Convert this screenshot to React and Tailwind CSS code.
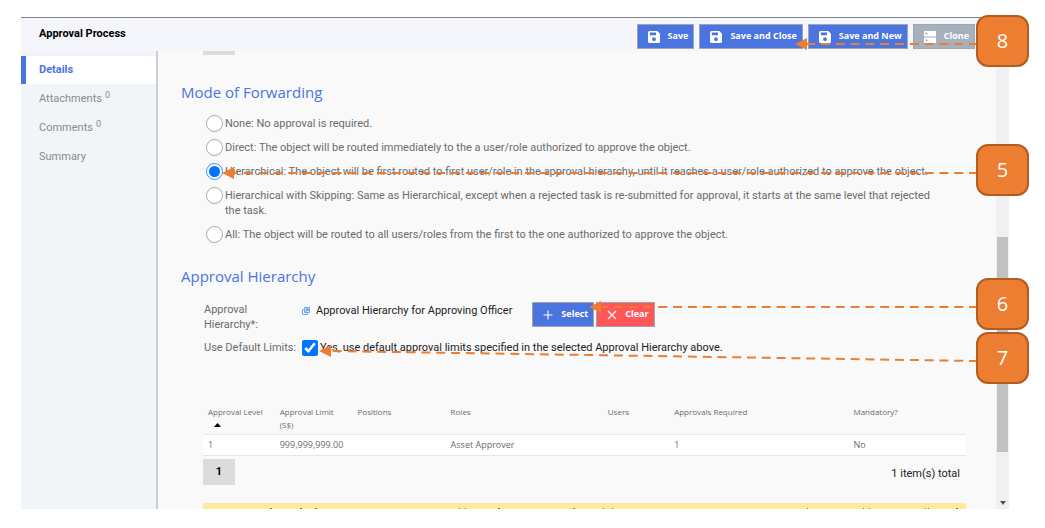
import React from "react";

const bodyFont = "font-['Roboto','Noto_Sans',sans-serif]";
const accentFont = "font-['Open_Sans','Noto_Sans',sans-serif]";

function SaveIcon() {
  return (
    <svg width="12" height="12" viewBox="0 0 12 12" aria-hidden="true">
      <path fill="#fff" fillRule="evenodd" d="M1.500 0h7.800L12 2.700v7.800a1.500 1.500 0 0 1-1.500 1.500h-9A1.500 1.500 0 0 1 0 10.500v-9A1.500 1.500 0 0 1 1.500 0zM1.800 1.500v2.700h6.200V1.500zM6 6.300a1.900 1.900 0 1 0 0 3.800 1.900 1.900 0 0 0 0-3.800z" />
    </svg>
  );
}

function CloneIcon() {
  return (
    <svg width="12" height="12" viewBox="0 0 12 12" aria-hidden="true">
      <path fill="#fff" fillRule="evenodd" d="M.7 0h10.600q.7 0 .7.700v4q0 .700-.700.700H.700Q0 5.400 0 4.700v-4Q0 0 .700 0zM2.500 1.600a1.100 1.100 0 1 0 0 2.200 1.100 1.100 0 0 0 0-2.200zM.700 6.600h10.600q.7 0 .7.700v4q0 .700-.700.700H.700Q0 12 0 11.300v-4q0-.700.700-.700zM2.500 8.200a1.100 1.100 0 1 0 0 2.200 1.100 1.100 0 0 0 0-2.200z" />
    </svg>
  );
}

function PlusIcon() {
  return (
    <svg width="10" height="10" viewBox="0 0 10 10" aria-hidden="true">
      <path d="M5 .5v9M.5 5h9" stroke="#fff" strokeWidth="1.100" />
    </svg>
  );
}

function CrossIcon() {
  return (
    <svg width="10" height="10" viewBox="0 0 10 10" aria-hidden="true">
      <path d="M1 1l8 8M9 1l-8 8" stroke="#fff" strokeWidth="1.200" />
    </svg>
  );
}

function LinkIcon() {
  return (
    <svg width="8" height="8" viewBox="0 0 8 8" aria-hidden="true">
      <path d="M2 2.500H.5v5h5V6" fill="none" stroke="#6ea8ee" />
      <path d="M2.500.5h5v5h-5z" fill="#d6e8fc" stroke="#6ea8ee" />
      <path d="M3.500 4.500l2.500-2.500M4 2h2v2" fill="none" stroke="#3f86e0" />
    </svg>
  );
}

function ActionButton({ icon, tone, children }) {
  return (
    <button type="button" className={`flex h-[25px] shrink-0 items-center gap-2 border border-[#a0a5b0] pl-[10px] pr-[5px] text-[9px] font-bold leading-4 text-white ${accentFont} ${tone}`}>
      <span className="pt-px">{icon}</span>
      <span className="pb-[2px]">{children}</span>
    </button>
  );
}

const options = [
  "None: No approval is required.",
  "Direct: The object will be routed immediately to the a user/role authorized to approve the object.",
  "Hierarchical: The object will be first routed to first user/role in the approval hierarchy, until it reaches a user/role authorized to approve the object.",
  "Hierarchical with Skipping: Same as Hierarchical, except when a rejected task is re-submitted for approval, it starts at the same level that rejected the task.",
  "All: The object will be routed to all users/roles from the first to the one authorized to approve the object.",
];

const tabs = [
  { label: "Details", active: true },
  { label: "Attachments", count: "0" },
  { label: "Comments", count: "0" },
  { label: "Summary" },
];

function Callout({ place, children }) {
  return (
    <div className={`absolute flex h-[52px] w-[53px] items-center justify-center rounded-xl border-2 border-[#b05c22] bg-[#ed7d31] text-xl text-white ${accentFont} ${place}`}>
      {children}
    </div>
  );
}

function Arrow({ place, height, d }) {
  return (
    <svg className={`pointer-events-none absolute ${place}`} height={height} aria-hidden="true">
      <path d={d} stroke="#ed7d31" strokeWidth="2" strokeDasharray="9 5.800" strokeDashoffset="2" fill="none" />
      <path d="M0 7L12 1V13z" fill="#ed7d31" />
    </svg>
  );
}

export default function App() {
  return (
    <div className={`relative bg-white pb-[19px] pl-[21px] pr-9 pt-[17px] text-[11px] text-[#6b6b6b] ${bodyFont}`}>
      <div className="border-t border-[#808285]">
        <header className="flex h-[33px] items-center justify-between bg-[#f5f6fb] pl-[18px] pr-[34px] pt-1">
          <h1 className="pb-1 font-bold text-black">Approval Process</h1>
          <div className="flex gap-[5px]">
            <ActionButton icon={<SaveIcon />} tone="bg-[#4a74e0]">Save</ActionButton>
            <ActionButton icon={<SaveIcon />} tone="bg-[#4a74e0]">Save and Close</ActionButton>
            <ActionButton icon={<SaveIcon />} tone="bg-[#4a74e0]">Save and New</ActionButton>
            <ActionButton icon={<CloneIcon />} tone="bg-[#a7b1bd]">Clone</ActionButton>
          </div>
        </header>

        <div className="flex">
          <nav className="flex w-[137px] shrink-0 flex-col gap-px border-r-2 border-[#cdcfd1] bg-[#f1f5f8] pt-[5px] text-[#8b8b8b]">
            {tabs.map((t) => (
              <a
                key={t.label}
                href="#"
                className={`flex h-7 items-center border-l-[5px] pl-[13px] pt-px ${t.active ? "border-[#4a74e0] bg-white font-bold text-[#4a74e0]" : "border-transparent"}`}
              >
                {t.label}
                {t.count && <sup className="ml-[3px] text-[9px]">{t.count}</sup>}
              </a>
            ))}
          </nav>

          <main className="min-w-0 flex-1 bg-[#f9f9f9] pl-[23px] pr-[30px]">
            <div className="ml-[22px] h-1 w-8 bg-[#dcdcdc]" />
            <fieldset>
              <legend className={`pt-[25px] text-[15px] leading-6 text-[#4a74e0] ${accentFont}`}>Mode of Forwarding</legend>
              <div className="flex flex-col gap-[9px] pl-[25px] pr-6 pt-3">
                {options.map((o, i) => (
                  <label key={o} className="flex items-start gap-[2px] leading-[15px]">
                    <input
                      type="radio"
                      name="mode"
                      defaultChecked={i === 2}
                      className="-my-px size-[17px] shrink-0 appearance-none rounded-full border border-[#a8a8a8] bg-white checked:border-[#3d94f6] checked:bg-[#0075ff] checked:bg-clip-content checked:p-[2px]"
                    />
                    <span>{o}</span>
                  </label>
                ))}
              </div>
            </fieldset>

            <section>
              <h2 className={`pt-[22px] text-[15px] leading-6 text-[#4a74e0] ${accentFont}`}>Approval Hierarchy</h2>
              <div className="flex items-start pl-[23px] pt-[14px]">
                <span className="w-[98px] shrink-0 pr-8 leading-[15px]">Approval Hierarchy*:</span>
                <a href="#" className="flex items-center gap-[6px] pt-px leading-4 text-[#222]">
                  <LinkIcon />
                  Approval Hierarchy for Approving Officer
                </a>
                <div className="ml-5 flex gap-[2px]">
                  <ActionButton icon={<PlusIcon />} tone="bg-[#4a74e0]">Select</ActionButton>
                  <ActionButton icon={<CrossIcon />} tone="bg-[#ff5757]">Clear</ActionButton>
                </div>
              </div>
              <div className="flex items-center pl-[23px] pt-2">
                <span className="w-[98px] shrink-0">Use Default Limits:</span>
                <label className="flex items-center gap-[2px] text-[#222]">
                  <input type="checkbox" defaultChecked className="size-4 accent-[#0075ff]" />
                  Yes, use default approval limits specified in the selected Approval Hierarchy above.
                </label>
              </div>
            </section>

            <div className="pl-[22px] pt-12">
              <table className={`w-full table-fixed text-left text-[9px] ${accentFont}`}>
                <colgroup>
                  <col className="w-[9.400%]" />
                  <col className="w-[10.200%]" />
                  <col className="w-[12.200%]" />
                  <col className="w-[20.600%]" />
                  <col className="w-[8.700%]" />
                  <col className="w-[23.500%]" />
                  <col />
                </colgroup>
                <thead>
                  <tr className="border-b border-[#e6e6e6] align-top text-[8px] leading-[13px]">
                    <th className="h-[30px] whitespace-nowrap pl-[5px] font-normal">
                      Approval Level
                      <svg className="ml-[6px] mt-[5px]" width="7" height="4" viewBox="0 0 7 4" aria-hidden="true"><path d="M0 4L3.500 0 7 4z" fill="#000" /></svg>
                    </th>
                    <th className="pl-[5px] pr-3 font-normal">Approval Limit (S$)</th>
                    <th className="pl-[5px] font-normal">Positions</th>
                    <th className="pl-[5px] font-normal">Roles</th>
                    <th className="pl-[5px] font-normal">Users</th>
                    <th className="pl-[5px] font-normal">Approvals Required</th>
                    <th className="pl-[5px] font-normal">Mandatory?</th>
                  </tr>
                </thead>
                <tbody>
                  <tr className="h-[21px] border-b border-[#e6e6e6] bg-white">
                    <td className="pl-[5px]">1</td>
                    <td className="pl-[5px]">999,999,999.00</td>
                    <td />
                    <td className="pl-[5px]">Asset Approver</td>
                    <td />
                    <td className="pl-[5px]">1</td>
                    <td className="pl-[5px]">No</td>
                  </tr>
                </tbody>
              </table>
              <div className="flex items-center justify-between pt-[3px] text-[#222]">
                <button type="button" className="h-[26px] w-8 bg-[#dcdcdc] font-bold text-black">1</button>
                <span className="pr-[6px] pt-1">1 item(s) total</span>
              </div>
              <div className="mt-[18px] h-[6px] overflow-hidden bg-[#ffeb9f]">
                <svg className="w-full" height="6" aria-hidden="true">
                  <path d="M67 5.500h2M97 5.500h2M112 5.500h2M256 5.500h1M262 5.500h1M295 5.500h2M370 5.500h2M400 5.500h1M409 5.500h1M604 5.500h1M660 5.500h1M666 5.500h1M722 5.500h1M725 5.500h1M753 5.500h2" stroke="#8a7f55" />
                </svg>
              </div>
            </div>
          </main>

          <div className="flex w-[13px] shrink-0 flex-col items-center bg-[#f0f0f0]" aria-hidden="true">
            <div className="mt-[186px] h-[215px] w-[11px] bg-[#c1c1c1]" />
            <svg className="mb-1 mt-auto" width="6" height="4" viewBox="0 0 6 4"><path d="M0 0h6L3 4z" fill="#505050" /></svg>
          </div>
        </div>
      </div>

      <Arrow place="right-[69px] top-[37px] w-[181px]" height="14" d="M181 7H10" />
      <Arrow place="right-[69px] top-[166px] w-[754px]" height="14" d="M754 7H10" />
      <Arrow place="right-[69px] top-[300px] w-[387px]" height="14" d="M387 7H10" />
      <Arrow place="right-[69px] top-[344px] w-[657px]" height="20" d="M657 17L10 7" />
      <Callout place="right-4 top-[15px]">8</Callout>
      <Callout place="right-4 top-[144px]">5</Callout>
      <Callout place="right-4 top-[278px]">6</Callout>
      <Callout place="right-4 top-[332px]">7</Callout>
    </div>
  );
}
